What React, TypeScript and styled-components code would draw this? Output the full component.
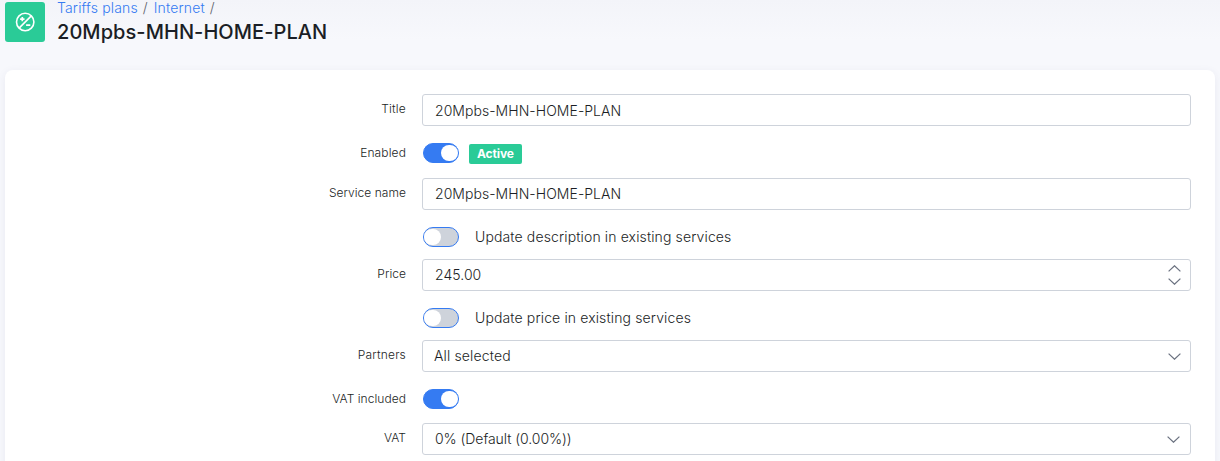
import React from "react";
import styled, { createGlobalStyle } from "styled-components";

const GlobalStyle = createGlobalStyle`
  * { box-sizing: border-box; }
  body {
    margin: 0;
    height: 461px;
    overflow: hidden;
    background: linear-gradient(#f3f4f9 0, #f7f8fc 40px);
    font-family: Inter, "Liberation Sans", sans-serif;
    color: #1b1e25;
  }
`;

const Page = styled.div`
  height: 461px;
  overflow: hidden;
  padding: 0 5px;
`;

const Header = styled.header`
  display: flex;
  gap: 12px;
  height: 70px;
  padding-top: 2px;
`;

const IconTile = styled.div`
  display: flex;
  align-items: center;
  justify-content: center;
  width: 40px;
  height: 40px;
  border-radius: 3px;
  background: #2acb97;
`;

const Breadcrumbs = styled.nav`
  display: flex;
  margin-top: -3px;
  height: 18px;
  font-size: 14px;
  line-height: 18px;
  font-weight: 300;
  letter-spacing: 0.14px;
  color: #5b606b;
`;

const Crumb = styled.a`
  color: #357bf2;
`;

const Slash = styled.span`
  margin: 0 6px 0 5px;
`;

const PageTitle = styled.h1`
  margin: 3px 0 0;
  font-size: 20px;
  line-height: 24px;
  font-weight: 500;
  letter-spacing: 0.06px;
  white-space: nowrap;
`;

const Card = styled.main`
  height: 440px;
  padding: 24px 24px 0 0;
  border-radius: 8px;
  background: #fff;
  box-shadow: 0 2px 8px rgba(60, 70, 110, 0.08);
`;

const Row = styled.div<{ $before?: number }>`
  display: grid;
  grid-template-columns: 401px 1fr;
  column-gap: 16px;
  align-items: center;
  margin-top: ${(p) => p.$before ?? 0}px;
`;

const Label = styled.label<{ $lift?: number; $spacing?: number }>`
  padding-bottom: ${(p) => p.$lift ?? 2}px;
  text-align: right;
  font-size: 12px;
  line-height: 16px;
  font-weight: 300;
  letter-spacing: ${(p) => p.$spacing ?? 0.05}px;
  white-space: nowrap;
`;

const Field = styled.div<{ $drop?: number; $indent?: number; $end?: number; $spacing?: number }>`
  display: flex;
  align-items: center;
  justify-content: space-between;
  height: 32px;
  padding: ${(p) => p.$drop ?? 0}px ${(p) => p.$end ?? 9}px 0 ${(p) => p.$indent ?? 12}px;
  border: 1px solid #ced3db;
  border-radius: 3px;
  font-size: 14px;
  line-height: 20px;
  font-weight: 300;
  letter-spacing: ${(p) => p.$spacing ?? 0.05}px;
`;

const SwitchLine = styled.div`
  display: flex;
  align-items: center;
  height: 20px;
  padding-left: 1px;
`;

const Switch = styled.span<{ $on?: boolean }>`
  display: flex;
  align-items: center;
  justify-content: ${(p) => (p.$on ? "flex-end" : "flex-start")};
  width: 36px;
  height: 20px;
  padding: 0 ${(p) => (p.$on ? 0.5 : 0.3)}px;
  border: 1px solid #357bf2;
  border-radius: 10px;
  background: ${(p) => (p.$on ? "#357bf2" : "#ced3db")};
`;

const Knob = styled.span`
  width: 16.6px;
  height: 16.6px;
  border-radius: 50%;
  background: #fff;
`;

const Badge = styled.span`
  height: 20px;
  margin: 2px 0 0 10px;
  padding: 0 8px;
  border-radius: 2px;
  background: #2acb97;
  color: #fff;
  font-size: 12px;
  line-height: 20px;
  font-weight: 700;
  letter-spacing: -0.12px;
`;

const SwitchText = styled.span`
  margin-left: 16px;
  font-size: 14px;
  line-height: 20px;
  font-weight: 300;
  letter-spacing: 0.13px;
`;

const Spinner = styled.span`
  display: flex;
  flex-direction: column;
  gap: 6px;
`;

const Chevron = ({ up = false }: { up?: boolean }) => (
  <svg width="13" height="7" viewBox="0 0 13 7" fill="none" stroke="#6b7280" strokeWidth="1.25">
    <path d={up ? "M.6 6.4 6.5.8l5.9 5.6" : "M.6.6 6.5 6.2l5.9-5.6"} />
  </svg>
);

const PlanIcon = () => (
  <svg width="20" height="20" viewBox="0 0 20 20" fill="none" stroke="#fff" strokeWidth="1.6">
    <circle cx="10.2" cy="10" r="8.7" />
    <path d="M4.1 16.1 16.3 3.9" />
    <path d="M5.1 7.1h4.4M7.3 4.9v4.4M11.1 13.1h4.2" strokeWidth="1.7" />
  </svg>
);

export default function App() {
  return (
    <Page>
      <GlobalStyle />
      <Header>
        <IconTile>
          <PlanIcon />
        </IconTile>
        <div>
          <Breadcrumbs>
            <Crumb>Tariffs plans</Crumb>
            <Slash>/</Slash>
            <Crumb>Internet</Crumb>
            <Slash>/</Slash>
          </Breadcrumbs>
          <PageTitle>20Mpbs-MHN-HOME-PLAN</PageTitle>
        </div>
      </Header>
      <Card>
        <Row>
          <Label $spacing={0.2}>Title</Label>
          <Field $drop={2}>20Mpbs-MHN-HOME-PLAN</Field>
        </Row>
        <Row $before={17}>
          <Label $lift={0} $spacing={0.12}>Enabled</Label>
          <SwitchLine>
            <Switch $on><Knob /></Switch>
            <Badge>Active</Badge>
          </SwitchLine>
        </Row>
        <Row $before={15}>
          <Label $spacing={0.04}>Service name</Label>
          <Field>20Mpbs-MHN-HOME-PLAN</Field>
        </Row>
        <Row $before={17}>
          <span />
          <SwitchLine>
            <Switch><Knob /></Switch>
            <SwitchText>Update description in existing services</SwitchText>
          </SwitchLine>
        </Row>
        <Row $before={12}>
          <Label>Price</Label>
          <Field $end={9.5}>
            245.00
            <Spinner>
              <Chevron up />
              <Chevron />
            </Spinner>
          </Field>
        </Row>
        <Row $before={17}>
          <span />
          <SwitchLine>
            <Switch><Knob /></Switch>
            <SwitchText>Update price in existing services</SwitchText>
          </SwitchLine>
        </Row>
        <Row $before={12}>
          <Label $spacing={0.18}>Partners</Label>
          <Field $indent={11} $spacing={0.14}>
            All selected
            <Chevron />
          </Field>
        </Row>
        <Row $before={17}>
          <Label $lift={0}>VAT included</Label>
          <SwitchLine>
            <Switch $on><Knob /></Switch>
          </SwitchLine>
        </Row>
        <Row $before={14}>
          <Label>VAT</Label>
          <Field $end={10} $spacing={-0.06}>
            0% (Default (0.00%))
            <Chevron />
          </Field>
        </Row>
      </Card>
    </Page>
  );
}
